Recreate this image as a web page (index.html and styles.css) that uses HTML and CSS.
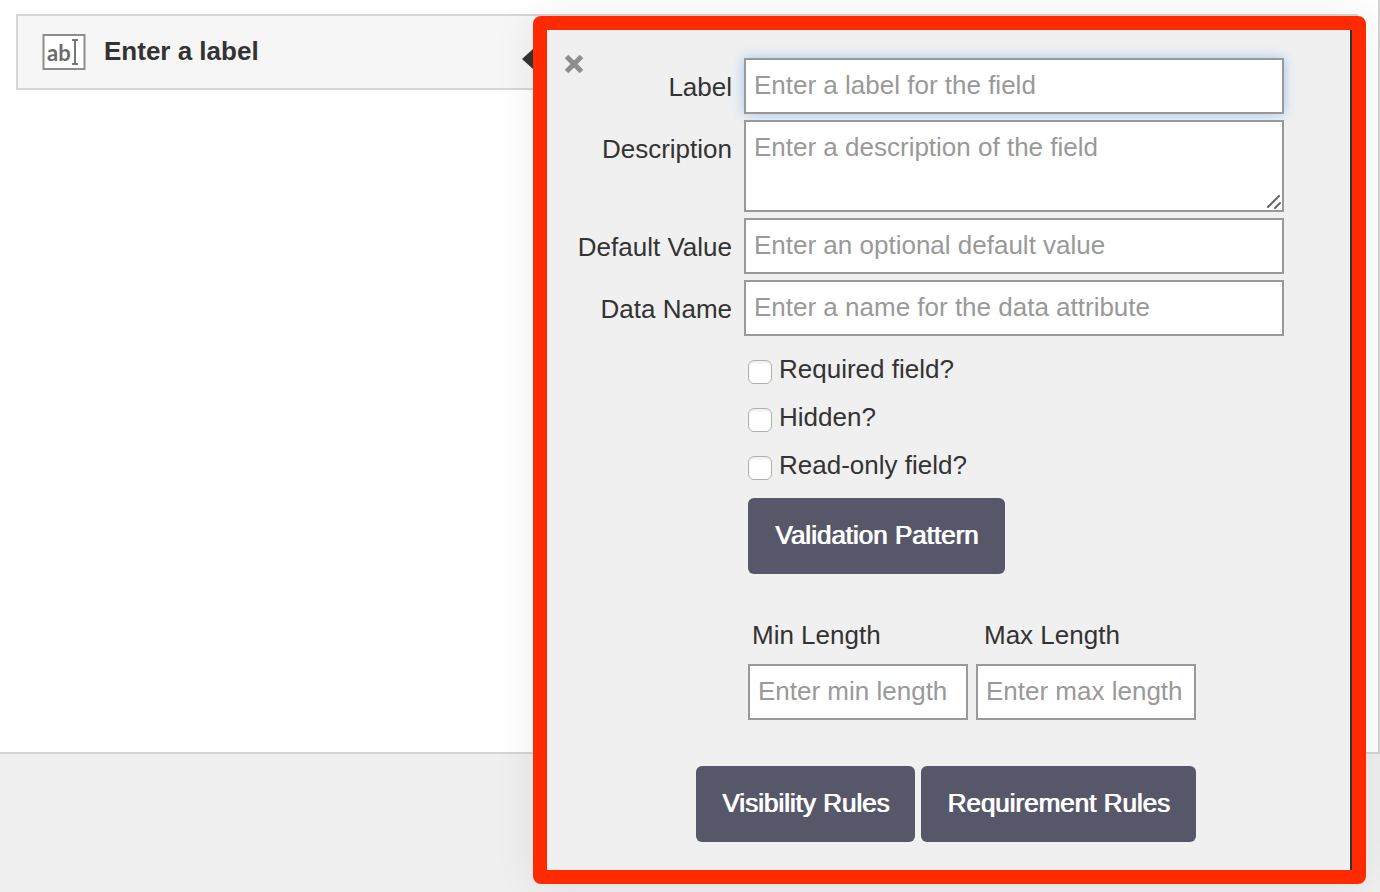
FILE: index.html
```html
<!DOCTYPE html>
<html lang="en">
<head>
<meta charset="utf-8">
<title>Form builder</title>
<link rel="stylesheet" href="styles.css">
</head>
<body>
<main class="canvas">
  <section class="field">
    <svg class="field-icon" width="44" height="36" viewBox="0 0 44 36" aria-hidden="true">
      <rect x="1.500" y="1" width="41" height="34" fill="#fff" stroke="#8d8d8d" stroke-width="2"/>
      <text class="icon-text" x="5" y="27">ab</text>
      <path d="M30 6H36M33 6V30M30 30H36" fill="none" stroke="#777" stroke-width="2"/>
    </svg>
    <h1 class="field-title">Enter a label</h1>
    <span class="pointer"></span>
    <form class="editor">
      <button class="close" type="button" aria-label="Close">
        <svg width="20" height="20" viewBox="0 0 20 20" aria-hidden="true"><path d="M2.500 2.500L17.500 17.500M17.500 2.500L2.500 17.500" stroke="#8e8e8e" stroke-width="5"/></svg>
      </button>
      <div class="rows">
        <label for="label">Label</label>
        <input class="box active" id="label" type="text" placeholder="Enter a label for the field">
        <label for="description">Description</label>
        <div class="area">
          <textarea class="box" id="description" placeholder="Enter a description of the field"></textarea>
          <svg class="grip" width="16" height="16" viewBox="0 0 16 16" aria-hidden="true"><path d="M2 14L13 3M9 15L14 10" stroke="#666" stroke-width="2" stroke-linecap="round"/></svg>
        </div>
        <label for="default">Default Value</label>
        <input class="box" id="default" type="text" placeholder="Enter an optional default value">
        <label for="name">Data Name</label>
        <input class="box" id="name" type="text" placeholder="Enter a name for the data attribute">
      </div>
      <div class="options">
        <div class="check"><input id="required" type="checkbox"><label for="required">Required field?</label></div>
        <div class="check"><input id="hidden" type="checkbox"><label for="hidden">Hidden?</label></div>
        <div class="check"><input id="readonly" type="checkbox"><label for="readonly">Read-only field?</label></div>
        <button class="button" type="button">Validation Pattern</button>
        <div class="lengths">
          <div class="length"><label for="min">Min Length</label><input class="box" id="min" type="text" placeholder="Enter min length"></div>
          <div class="length"><label for="max">Max Length</label><input class="box" id="max" type="text" placeholder="Enter max length"></div>
        </div>
      </div>
      <div class="rules">
        <button class="button" type="button">Visibility Rules</button>
        <button class="button" type="button">Requirement Rules</button>
      </div>
    </form>
  </section>
</main>
</body>
</html>
```

FILE: styles.css
```css
* { box-sizing: border-box; }
body {
  margin: 0;
  min-height: 100vh;
  background: #efefef;
  color: #333;
  font: 26px/32px "Liberation Sans", Arial, sans-serif;
}
input, textarea, button { font: inherit; }
.canvas {
  min-height: 754px;
  padding: 14px 20px 14px 16px;
  background: #fff;
  border: solid #d4d4d4;
  border-width: 0 2px 2px 0;
}
.field {
  position: relative;
  display: flex;
  align-items: center;
  gap: 18px;
  height: 76px;
  padding: 0 24px;
  background: #f6f6f6;
  border: 2px solid #d6d6d6;
}
.field-title { margin: 0; padding-bottom: 2px; font-size: 26px; line-height: 32px; }
.icon-text { font: bold 22px Lato, sans-serif; fill: #6b6b6b; }
.pointer {
  position: absolute;
  top: 33px;
  left: 504px;
  border: 10px solid transparent;
  border-right: 11px solid #333;
  border-left: 0;
}
.editor {
  position: absolute;
  top: 0;
  left: 515px;
  right: -10px;
  padding: 28px 68px 28px 0;
  background: #f0f0f0;
  border: 14px solid #ff2a00;
  border-radius: 8px;
  box-shadow: 0 0 40px rgba(0, 0, 0, 0.08), inset -2px 0 #333;
}
.close {
  position: absolute;
  top: 24px;
  left: 17px;
  padding: 0;
  border: 0;
  background: none;
  line-height: 0;
}
.rows {
  display: grid;
  grid-template-columns: 185px 1fr;
  gap: 6px 12px;
}
.rows > label { padding-top: 13px; text-align: right; }
.box {
  display: block;
  width: 100%;
  height: 56px;
  margin: 0;
  padding: 0 8px 2px;
  border: 2px solid #999;
  border-radius: 0;
  background: #fff;
  color: #333;
  outline: 0;
}
.box::placeholder { color: #999; opacity: 1; }
.active { box-shadow: 0 0 12px #9dc8ee; }
textarea.box { height: 92px; padding: 9px 8px; resize: none; }
.area { position: relative; }
.grip { position: absolute; right: 2px; bottom: 3px; }
.options { padding: 9px 0 0 201px; }
.check { display: flex; align-items: center; gap: 7px; height: 48px; }
.check input {
  appearance: none;
  width: 24px;
  height: 24px;
  margin: 6px 0 0;
  border: 1px solid #b0b0b0;
  border-radius: 6px;
  background: #fff;
  box-shadow: inset 0 2px 2px #eee;
}
.button {
  height: 76px;
  padding: 0 26px 2px;
  border: 0;
  border-radius: 6px;
  background: #57576a;
  color: #fff;
  text-shadow: 1px 0 #fff;
  white-space: nowrap;
}
.options .button { display: block; margin-top: 9px; padding: 0 27px 2px; }
.lengths { display: flex; gap: 8px; margin-top: 45px; }
.length { width: 220px; }
.length label { display: block; padding: 0 4px 13px; }
.length + .length label { padding-left: 8px; }
.rules { display: flex; gap: 6px; margin-top: 46px; padding-left: 149px; }
```
